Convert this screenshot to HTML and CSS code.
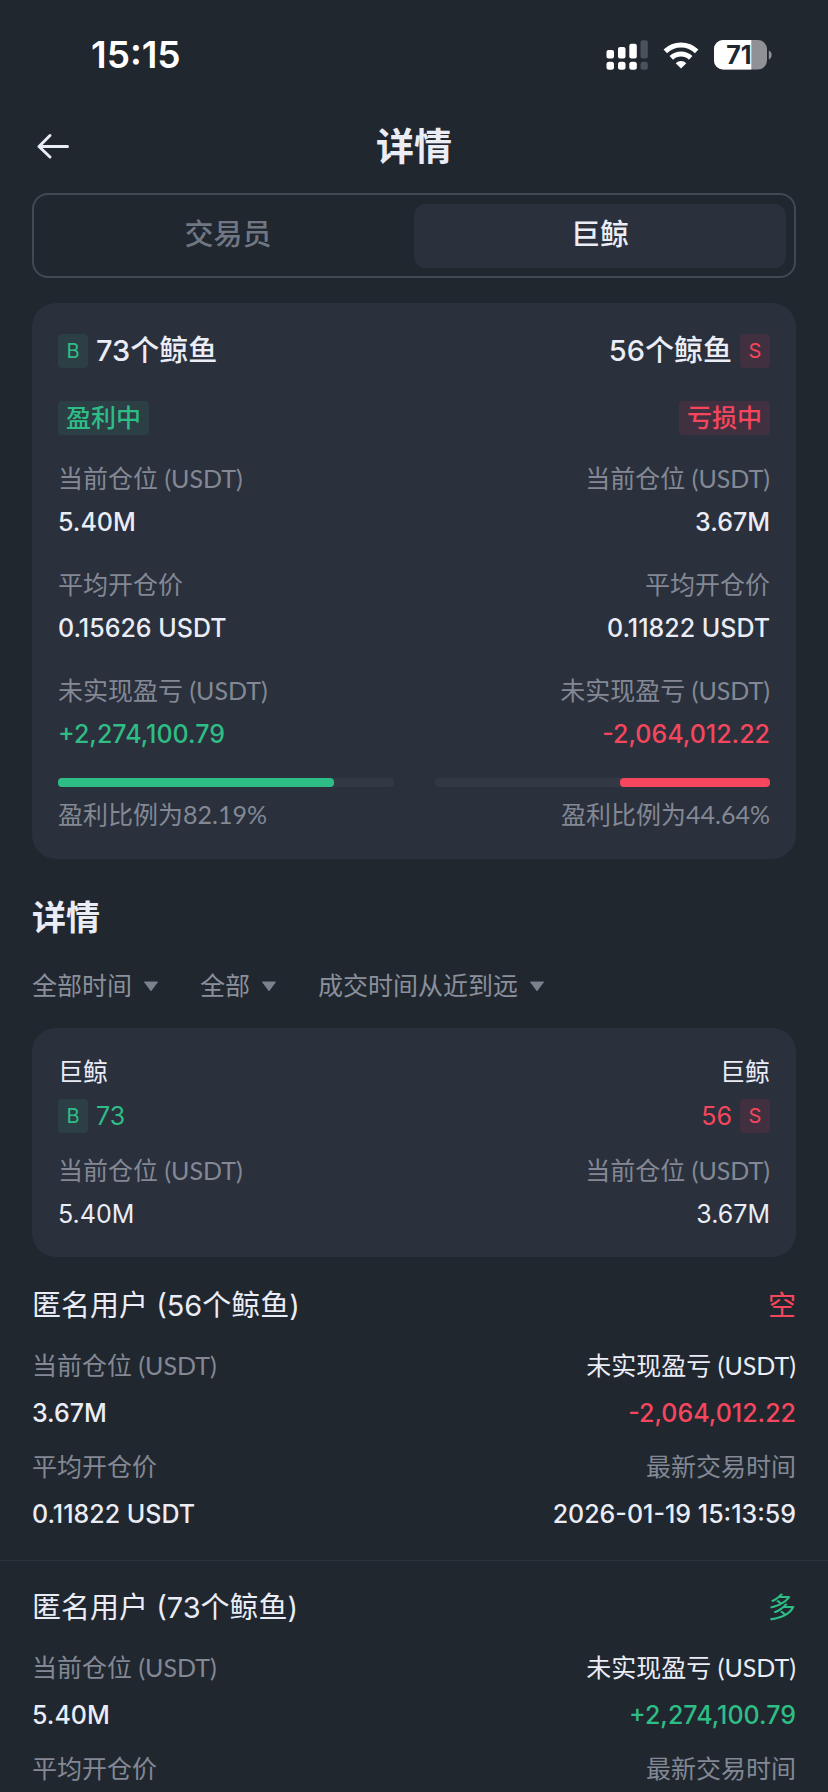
FILE: index.html
```html
<!DOCTYPE html>
<html lang="zh-CN">
<head>
    <meta charset="UTF-8">
    <meta name="viewport" content="width=device-width, initial-scale=1.0">
    <title>详情</title>
    <link rel="stylesheet" href="styles.css">
</head>
<body>
    <div class="status-bar">
        <span class="time">15:15</span>
        <div class="status-icons">
            <svg width="42" height="30" viewBox="0 0 42 30" fill="#fff">
                <rect x="0.5" y="10" width="7.5" height="8.5" rx="2"/>
                <rect x="12" y="7" width="7.5" height="11.5" rx="2"/>
                <rect x="23.3" y="3.8" width="7.5" height="14.7" rx="2"/>
                <rect x="34.5" y="0.3" width="7.3" height="18.2" rx="2" fill="#4b515a"/>
                <rect x="0.5" y="21.7" width="7.5" height="8" rx="2.5"/>
                <rect x="12" y="21.7" width="7.5" height="8" rx="2.5"/>
                <rect x="23.3" y="21.7" width="7.5" height="8" rx="2.5"/>
                <rect x="34.5" y="21.7" width="7.3" height="8" rx="2.5" fill="#4b515a"/>
            </svg>
            <svg width="36" height="28" viewBox="0 0 36 28" fill="none" stroke="#fff" stroke-width="5">
                <path d="M2.3 10.4a22.6 22.6 0 0 1 31.4 0"/>
                <path d="M8.3 16.9a14 14 0 0 1 19.4 0"/>
                <path d="M12.7 22.2a7.8 7.8 0 0 1 10.6 0L18 27.4z" fill="#fff" stroke="none"/>
            </svg>
            <svg width="58" height="30" viewBox="0 0 58 30">
                <clipPath id="battery"><rect width="53" height="29.5" rx="9"/></clipPath>
                <g clip-path="url(#battery)">
                    <rect width="53" height="30" fill="#8f9196"/>
                    <rect width="37.3" height="30" fill="#fff"/>
                </g>
                <path d="M54.8 10.4c3.8 1 3.8 8 0 9z" fill="#8f9196"/>
                <text class="battery-level" x="25" y="24" text-anchor="middle">71</text>
            </svg>
        </div>
    </div>

    <header class="header">
        <button type="button" class="back" aria-label="返回">
            <svg width="34" height="28" viewBox="0 0 34 28" fill="none" stroke="#eaecf6" stroke-width="3" stroke-linecap="round" stroke-linejoin="round">
                <path d="M31.5 14.5H3M14 3.5L3 14.5 14 25"/>
            </svg>
        </button>
        <h1>详情</h1>
    </header>

    <main>
        <div class="tabs">
            <button type="button" class="tab">交易员</button>
            <button type="button" class="tab active">巨鲸</button>
        </div>

        <section class="card summary">
            <div class="side">
                <div class="side-head"><span class="tag buy">B</span><strong>73个鲸鱼</strong></div>
                <span class="pill buy">盈利中</span>
                <dl class="stats">
                    <div><dt>当前仓位 (USDT)</dt><dd>5.40M</dd></div>
                    <div><dt>平均开仓价</dt><dd>0.15626 USDT</dd></div>
                    <div><dt>未实现盈亏 (USDT)</dt><dd class="up">+2,274,100.79</dd></div>
                </dl>
                <div class="bar"><div class="bar-fill up-bg" style="width: 82.19%"></div></div>
                <p class="ratio">盈利比例为82.19%</p>
            </div>
            <div class="side right">
                <div class="side-head"><strong>56个鲸鱼</strong><span class="tag sell">S</span></div>
                <span class="pill sell">亏损中</span>
                <dl class="stats">
                    <div><dt>当前仓位 (USDT)</dt><dd>3.67M</dd></div>
                    <div><dt>平均开仓价</dt><dd>0.11822 USDT</dd></div>
                    <div><dt>未实现盈亏 (USDT)</dt><dd class="down">-2,064,012.22</dd></div>
                </dl>
                <div class="bar"><div class="bar-fill down-bg" style="width: 44.64%"></div></div>
                <p class="ratio">盈利比例为44.64%</p>
            </div>
        </section>

        <h2>详情</h2>
        <div class="filters">
            <label class="filter">
                <select aria-label="时间"><option>全部时间</option></select>
                <svg width="16" height="11" viewBox="0 0 16 11"><path d="M1.5 1h13L8 9.8z" fill="#7b818d" stroke="#7b818d" stroke-linejoin="round"/></svg>
            </label>
            <label class="filter">
                <select aria-label="方向"><option>全部</option></select>
                <svg width="16" height="11" viewBox="0 0 16 11"><path d="M1.5 1h13L8 9.8z" fill="#7b818d" stroke="#7b818d" stroke-linejoin="round"/></svg>
            </label>
            <label class="filter">
                <select aria-label="排序"><option>成交时间从近到远</option></select>
                <svg width="16" height="11" viewBox="0 0 16 11"><path d="M1.5 1h13L8 9.8z" fill="#7b818d" stroke="#7b818d" stroke-linejoin="round"/></svg>
            </label>
        </div>

        <section class="card totals">
            <div class="side">
                <p class="name">巨鲸</p>
                <div class="count up"><span class="tag buy">B</span>73</div>
                <dl class="light"><dt>当前仓位 (USDT)</dt><dd>5.40M</dd></dl>
            </div>
            <div class="side right">
                <p class="name">巨鲸</p>
                <div class="count down">56<span class="tag sell">S</span></div>
                <dl class="light"><dt>当前仓位 (USDT)</dt><dd>3.67M</dd></dl>
            </div>
        </section>
    </main>

    <section class="list">
        <article class="item">
            <div class="item-head"><h3>匿名用户 (56个鲸鱼)</h3><span class="down">空</span></div>
            <dl class="item-grid">
                <div><dt>当前仓位 (USDT)</dt><dd>3.67M</dd></div>
                <div class="right"><dt class="bright">未实现盈亏 (USDT)</dt><dd class="down">-2,064,012.22</dd></div>
                <div><dt>平均开仓价</dt><dd>0.11822 USDT</dd></div>
                <div class="right"><dt>最新交易时间</dt><dd>2026-01-19 15:13:59</dd></div>
            </dl>
        </article>
        <article class="item">
            <div class="item-head"><h3>匿名用户 (73个鲸鱼)</h3><span class="up">多</span></div>
            <dl class="item-grid">
                <div><dt>当前仓位 (USDT)</dt><dd>5.40M</dd></div>
                <div class="right"><dt class="bright">未实现盈亏 (USDT)</dt><dd class="up">+2,274,100.79</dd></div>
                <div><dt>平均开仓价</dt></div>
                <div class="right"><dt>最新交易时间</dt></div>
            </dl>
        </article>
    </section>
</body>
</html>
```
FILE: styles.css
```css
* {
    box-sizing: border-box;
}

body {
    margin: 0;
    background-color: #20272f;
    color: #eaecf6;
    font-family: Inter, "Noto Sans CJK SC", sans-serif;
    font-size: 25px;
    line-height: 42px;
}

h1, h2, h3, p, dl, dd {
    margin: 0;
}

button, select {
    border: none;
    padding: 0;
    background: none;
    color: inherit;
    font: inherit;
}

svg {
    display: block;
}

/* status bar */
.status-bar {
    display: flex;
    justify-content: space-between;
    align-items: center;
    height: 110px;
    padding: 0 56px 0 91px;
    color: #fff;
}

.time {
    font-size: 37px;
    font-weight: 600;
}

.status-icons {
    display: flex;
    align-items: center;
    gap: 15px;
}

.battery-level {
    font-size: 25px;
    font-weight: 700;
    fill: #20272f;
}

/* header */
.header {
    display: grid;
    grid-template-columns: 1fr auto 1fr;
    align-items: center;
    height: 72px;
    padding: 0 36px;
}

.back {
    justify-self: start;
    cursor: pointer;
}

h1 {
    font-size: 38px;
    font-weight: 700;
}

main {
    padding: 11px 32px 0;
}

.tabs {
    display: flex;
    padding: 9px 8px 8px;
    border: 2px solid #434954;
    border-radius: 16px;
}

.tab {
    flex: 1;
    height: 64px;
    padding-bottom: 2px;
    border-radius: 12px;
    font-size: 29px;
    font-weight: 500;
    color: #717683;
    cursor: pointer;
}

.tab.active {
    background-color: #2a303c;
    color: #eaecf6;
}

/* cards */
.card {
    display: grid;
    grid-template-columns: 1fr 1fr;
    column-gap: 41px;
    border-radius: 24px;
    background-color: #2a303c;
}

.summary {
    margin-top: 25px;
    padding: 30px 26px 24px;
}

.side {
    display: flex;
    flex-direction: column;
    align-items: flex-start;
}

.side.right {
    align-items: flex-end;
}

.right {
    text-align: right;
}

.side-head {
    display: flex;
    align-items: center;
    gap: 8px;
    height: 36px;
    margin-bottom: 32px;
    font-size: 29px;
}

.side-head strong {
    font-weight: 500;
}

.tag {
    width: 30px;
    border-radius: 4px;
    font-size: 20px;
    font-weight: 400;
    line-height: 34px;
    text-align: center;
}

.pill {
    margin-bottom: 22px;
    padding: 0 8px;
    border-radius: 4px;
    font-weight: 500;
    line-height: 34px;
}

.buy {
    background-color: #2b3f45;
    color: #2ebd85;
}

.sell {
    background-color: #41303f;
    color: #f6465d;
}

.up {
    color: #2ebd85;
}

.down {
    color: #f6465d;
}

dt, .ratio {
    color: #838894;
    font-family: Lato, "Noto Sans CJK SC", sans-serif;
}

dt.bright {
    color: #eaecf6;
}

dd {
    font-weight: 500;
    line-height: 46px;
}

.stats {
    display: grid;
    row-gap: 18px;
}

.bar {
    display: flex;
    width: 100%;
    height: 9px;
    margin: 21px 0 6px;
    border-radius: 4px;
    background-color: #333944;
}

.right .bar {
    justify-content: flex-end;
}

.bar-fill {
    border-radius: 4px;
}

.up-bg {
    background-color: #2ebd85;
}

.down-bg {
    background-color: #f6465d;
}

/* filters */
h2 {
    margin-top: 38px;
    font-size: 34px;
    font-weight: 700;
}

.filters {
    display: flex;
    gap: 41px;
    margin: 26px 0 21px;
    color: #8b909c;
}

.filter {
    display: flex;
    align-items: center;
    gap: 10px;
}

.filter select {
    appearance: none;
    height: 42px;
    cursor: pointer;
}

.totals {
    padding: 23px 26px 20px;
}

.count {
    display: flex;
    align-items: center;
    gap: 8px;
    height: 34px;
    margin: 6px 0 16px;
}

.light dd {
    font-weight: 400;
}

/* user list */
.list {
    padding-top: 2px;
}

.item {
    padding: 26px 32px 23px;
    border-bottom: 1px solid #2c333d;
}

.item:last-child {
    padding-bottom: 0;
    border-bottom: none;
}

.item-head {
    display: flex;
    justify-content: space-between;
    margin-bottom: 17px;
    font-size: 28px;
}

h3 {
    font-size: 29px;
    font-weight: 400;
}

.item-grid {
    display: grid;
    grid-template-columns: 1fr 1fr;
    row-gap: 9px;
}

.item-grid dd {
    margin-top: 4px;
}
```
